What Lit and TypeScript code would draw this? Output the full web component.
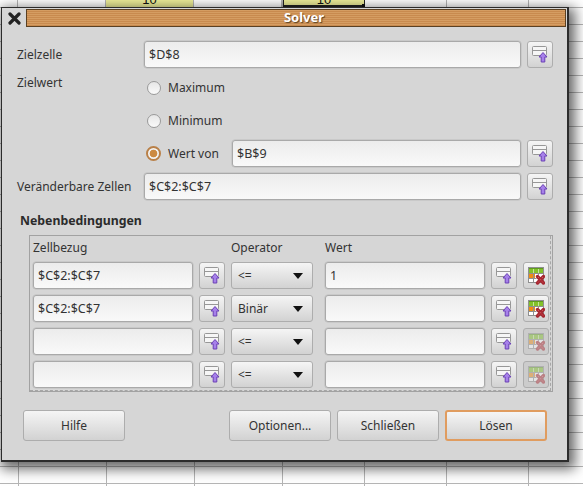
import { LitElement, html, css } from "lit";
import { customElement } from "lit/decorators.js";

const shrinkIcon = html`<svg width="16" height="17" viewBox="0 0 16 17">
  <rect x="0.5" y="0.5" width="14" height="9" rx="1" fill="#f6f6f6" stroke="#979797"/>
  <path d="M1 4.500h13" stroke="#979797"/>
  <path d="M11 6.500l4 4.500h-2.200v5h-3.600v-5H7z" fill="#a680ea" stroke="#6a40b4" stroke-linejoin="round"/>
</svg>`;

const deleteIcon = html`<svg width="17" height="18" viewBox="0 0 17 18">
  <rect x="0.500" y="0.500" width="15" height="15" fill="#fff" stroke="#8f8f8f"/>
  <rect x="1" y="1" width="14" height="5" fill="#83c12a"/>
  <path d="M1 1.500h14" stroke="#5f9c1e"/>
  <path d="M5.500 2v4M10.500 2v4" stroke="#c4e59a"/>
  <rect x="1" y="7" width="6" height="4" fill="#f08c14"/>
  <path d="M5.500 6v10M10.500 6v2M.5 6.500h15M.5 11.500h8" stroke="#8f8f8f" fill="none"/>
  <path d="M9.500 9.500l6 6.500M15.500 9.500l-6 6.500" stroke="#a5262f" stroke-width="3.400" stroke-linecap="round"/>
  <path d="M10 10l5 5.500M15 10l-5 5.500" stroke="#d4535c" stroke-width="1" stroke-dasharray="1.500 1.500"/>
</svg>`;

const rows = [
  { ref: "$C$2:$C$7", op: "<=", val: "1", on: true },
  { ref: "$C$2:$C$7", op: "Binär", val: "", on: true },
  { ref: "", op: "<=", val: "", on: false },
  { ref: "", op: "<=", val: "", on: false },
];

@customElement("app-root")
export class AppRoot extends LitElement {
  static styles = css`
    :host {
      display: block;
      font-family: "Noto Sans", "Open Sans", sans-serif;
      font-size: 12px;
      color: #333;
    }
    .desk {
      position: relative;
      width: 583px;
      height: 486px;
      overflow: hidden;
      background-color: #fff;
      background-image:
        repeating-linear-gradient(to right, #b5b5b5 0 1px, transparent 1px 88px),
        repeating-linear-gradient(to right, #b5b5b5 0 1px, transparent 1px 82px),
        repeating-linear-gradient(to bottom, #b5b5b5 0 1px, transparent 1px 17px);
      background-position: 18px 0, 282px 0, 0 7px;
      background-size: 264px 100%, 301px 100%, 100% 100%;
      background-repeat: no-repeat, no-repeat, repeat;
    }
    .cells {
      display: grid;
      grid-template-columns: 18px 88px 88px 88px 83px;
      height: 7px;
      overflow: hidden;
    }
    .cell {
      position: relative;
      box-sizing: border-box;
      border-right: 1px solid #b5b5b5;
      background: #fff;
      text-align: center;
      line-height: 12px;
      margin-top: -6px;
      height: 13px;
      font-family: "Liberation Sans", sans-serif;
      font-size: 13px;
      color: #111;
    }
    .cell.hit {
      background: #eeee99;
    }
    .cell.sel {
      background: #eeee99;
      margin-left: 1px;
      border-left: 1px solid #222;
      border-right: 1px solid #222;
      border-bottom: 2px solid #222;
    }
    .handle {
      position: absolute;
      right: -1px;
      bottom: -2px;
      width: 3px;
      height: 3px;
      background: #111;
    }
    .dialog {
      position: absolute;
      left: 1px;
      top: 7px;
      width: 568px;
      height: 455px;
      box-sizing: border-box;
      background: #d6d6d6;
      border: 1px solid #2c2c2c;
      border-right-width: 2px;
      border-bottom-width: 2px;
      box-shadow: 3px 4px 12px 3px rgba(0, 0, 0, 0.6);
    }
    .title {
      display: flex;
      align-items: center;
      gap: 4px;
      margin: 1px 1px 0 0;
      height: 18px;
    }
    .close {
      width: 16px;
      margin-left: 4px;
      display: flex;
      justify-content: center;
    }
    .wood {
      flex: 1;
      height: 18px;
      box-sizing: border-box;
      border: 1px solid #5a4022;
      padding-left: 16px;
      background: repeating-linear-gradient(to bottom, #d59d62 0 1px, #c88a4e 1px 2px);
      color: #fff;
      font-weight: 700;
      font-size: 13px;
      line-height: 15px;
      text-align: center;
      text-shadow: 1px 1px 1px #5a4022;
    }
    .body {
      padding: 14px 15px 0;
    }
    .form {
      display: grid;
      grid-template-columns: 127px 377px 26px;
      grid-auto-rows: 27px;
      row-gap: 6px;
    }
    .form .shrink {
      margin-left: 6px;
    }
    .lbl {
      align-self: center;
    }
    .lbl.top {
      align-self: start;
    }
    .radio {
      display: flex;
      align-items: center;
      padding-left: 3px;
    }
    .dot {
      width: 12px;
      height: 12px;
      border-radius: 50%;
      border: 1px solid #9a9a9a;
      background: linear-gradient(#e6e6e6, #fafafa);
      margin-right: 7px;
      flex: none;
    }
    .dot.on {
      box-sizing: border-box;
      width: 15px;
      height: 15px;
      margin-left: -1px;
      margin-right: 7px;
      background: radial-gradient(circle, #cc8a42 0 3.500px, #f3f3f3 4.200px);
      border: 2px solid #b98048;
    }
    .field {
      box-sizing: border-box;
      height: 27px;
      border: 1px solid #a9a9a9;
      border-radius: 3px;
      background: linear-gradient(#ececec, #f9f9f9);
      box-shadow: 0 0 0 0.500px #bcbcbc;
      padding-left: 4px;
      font-size: 12.500px;
      line-height: 25px;
      white-space: nowrap;
      overflow: hidden;
    }
    .w289 {
      width: 289px;
      margin-left: auto;
    }
    .shrink {
      box-sizing: border-box;
      width: 26px;
      height: 27px;
      border: 1px solid #adadad;
      border-radius: 3px;
      background: linear-gradient(#f5f5f5, #d2d2d2);
      display: flex;
      align-items: center;
      justify-content: center;
    }
    .shrink.off {
      background: #cccccc;
    }
    .shrink.off svg {
      opacity: 0.45;
    }
    h2 {
      margin: 12px 0 5px 3px;
      font-size: 12.300px;
      line-height: 18px;
      font-weight: 700;
      color: #2b2b2b;
    }
    .frame {
      margin-left: 12px;
      width: 524px;
      height: 157px;
      box-sizing: border-box;
      border: 1px solid #a2a2a2;
    }
    .inner {
      box-sizing: border-box;
      height: 155px;
      border-right: 1px dashed #a6a6a6;
      border-bottom: 1px dashed #a6a6a6;
      margin-right: 1px;
      padding: 3px 0 0 3px;
      display: grid;
      grid-template-columns: 160px 26px 82px 166px 26px 26px;
      grid-template-rows: 17px repeat(4, 27px);
      column-gap: 6px;
      row-gap: 6px;
    }
    .val {
      margin-left: 6px;
    }
    .head {
      line-height: 17px;
    }
    .select {
      box-sizing: border-box;
      height: 27px;
      border: 1px solid #adadad;
      border-radius: 3px;
      background: linear-gradient(#f5f5f5, #d2d2d2);
      display: flex;
      align-items: center;
      justify-content: space-between;
      padding: 0 9px 0 6px;
    }
    .select i {
      width: 0;
      height: 0;
      border-left: 5px solid transparent;
      border-right: 5px solid transparent;
      border-top: 6px solid #111;
    }
    .foot {
      display: flex;
      gap: 6px;
      padding: 0 6px;
      margin-top: 18px;
      width: 524px;
    }
    .foot button {
      width: 102px;
      height: 31px;
      box-sizing: border-box;
      border: 1px solid #adadad;
      border-radius: 3px;
      background: linear-gradient(#f5f5f5, #d2d2d2);
      font: inherit;
      color: inherit;
      padding: 0;
    }
    .foot button.help {
      margin-right: auto;
    }
    .foot button.main {
      border: 2px solid #e09c5f;
    }
  `;

  render() {
    return html`
      <div class="desk">
        <div class="cells">
          <div class="cell"></div>
          <div class="cell"></div>
          <div class="cell hit">10</div>
          <div class="cell"></div>
          <div class="cell sel">10<span class="handle"></span></div>
        </div>
        <div class="dialog">
          <div class="title">
            <div class="close">
              <svg width="13" height="13" viewBox="0 0 13 13">
                <path d="M2 2l9 9M11 2l-9 9" stroke="#222" stroke-width="3.200" stroke-linecap="round"/>
              </svg>
            </div>
            <div class="wood">Solver</div>
          </div>
          <div class="body">
            <div class="form">
              <div class="lbl">Zielzelle</div>
              <div class="field">$D$8</div>
              <div class="shrink">${shrinkIcon}</div>

              <div class="lbl top">Zielwert</div>
              <div class="radio"><span class="dot"></span>Maximum</div>
              <div></div>

              <div></div>
              <div class="radio"><span class="dot"></span>Minimum</div>
              <div></div>

              <div></div>
              <div class="radio"><span class="dot on"></span>Wert von<div class="field w289">$B$9</div></div>
              <div class="shrink">${shrinkIcon}</div>

              <div class="lbl">Veränderbare Zellen</div>
              <div class="field">$C$2:$C$7</div>
              <div class="shrink">${shrinkIcon}</div>
            </div>
            <h2>Nebenbedingungen</h2>
            <div class="frame">
              <div class="inner">
                <div class="head">Zellbezug</div>
                <div></div>
                <div class="head">Operator</div>
                <div class="head val">Wert</div>
                <div></div>
                <div></div>
                ${rows.map(
                  (r) => html`
                    <div class="field">${r.ref}</div>
                    <div class="shrink">${shrinkIcon}</div>
                    <div class="select">${r.op}<i></i></div>
                    <div class="field val">${r.val}</div>
                    <div class="shrink">${shrinkIcon}</div>
                    <div class="shrink ${r.on ? "" : "off"}">${deleteIcon}</div>
                  `
                )}
              </div>
            </div>
            <div class="foot">
              <button class="help">Hilfe</button>
              <button>Optionen...</button>
              <button>Schließen</button>
              <button class="main">Lösen</button>
            </div>
          </div>
        </div>
      </div>
    `;
  }
}
